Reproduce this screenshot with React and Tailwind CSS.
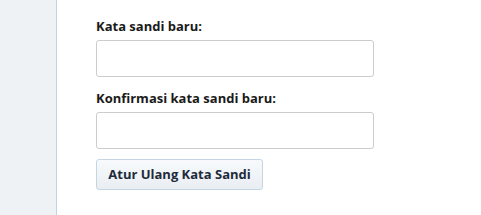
export default function App() {
  return (
    <div className="flex h-[215px] w-[481px] bg-white" style={{ fontFamily: '"Open Sans", "Noto Sans", sans-serif' }}>
      <div className="w-[57px] shrink-0 border-r border-[#c5d3df] bg-[#eef2f5]" />
      <div className="flex flex-col pl-[39px] pt-[17px]">
        <label className="text-[13px] font-bold leading-[18px] text-[#1a1a1a]">Kata sandi baru:</label>
        <input type="password" className="mt-[5px] h-[37px] w-[278px] rounded-[3px] border border-[#cccccc] bg-white" />
        <label className="mt-[12px] text-[13px] font-bold leading-[18px] text-[#1a1a1a]">Konfirmasi kata sandi baru:</label>
        <input type="password" className="mt-[5px] h-[37px] w-[278px] rounded-[3px] border border-[#cccccc] bg-white" />
        <button className="mt-[10px] h-[31px] w-[167px] rounded-[3px] border border-[#c5d5e4] bg-gradient-to-b from-[#f8fafc] to-[#e9eef3] text-[13px] font-bold text-[#1e2b3b]">
          Atur Ulang Kata Sandi
        </button>
      </div>
    </div>
  );
}
